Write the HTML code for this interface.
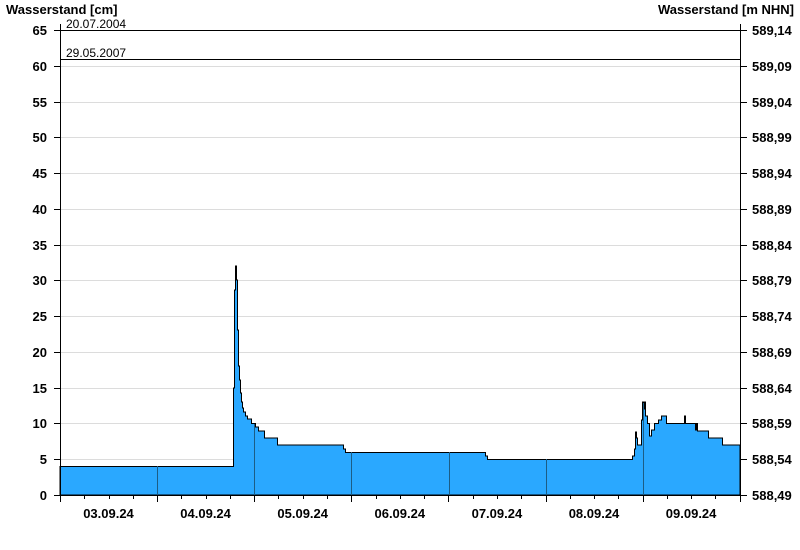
<!DOCTYPE html>
<html><head><meta charset="utf-8"><style>
body{margin:0;background:#fff;width:800px;height:550px;overflow:hidden}
svg{display:block;font-family:"Liberation Sans",Arial,sans-serif}
.l{font-size:13px;font-weight:bold;fill:#000}
</style></head><body>
<svg width="800" height="550" viewBox="0 0 800 550">
<text x="6" y="14" class="l">Wasserstand [cm]</text>
<text x="794" y="14" class="l" text-anchor="end">Wasserstand [m NHN]</text>
<g stroke="#dcdcdc" stroke-width="1">
<line x1="60" x2="740" y1="459.5" y2="459.5"/><line x1="60" x2="740" y1="423.5" y2="423.5"/>
<line x1="60" x2="740" y1="388.5" y2="388.5"/><line x1="60" x2="740" y1="352.5" y2="352.5"/>
<line x1="60" x2="740" y1="316.5" y2="316.5"/><line x1="60" x2="740" y1="280.5" y2="280.5"/>
<line x1="60" x2="740" y1="245.5" y2="245.5"/><line x1="60" x2="740" y1="209.5" y2="209.5"/>
<line x1="60" x2="740" y1="173.5" y2="173.5"/><line x1="60" x2="740" y1="137.5" y2="137.5"/>
<line x1="60" x2="740" y1="102.5" y2="102.5"/><line x1="60" x2="740" y1="66.5" y2="66.5"/>
</g>
<path fill="#2aa8ff" stroke="#000" stroke-width="1" d="M60,466.5 H233.5 V388 H234.5 V290 H235.5 V266 H236.5 V280 H237.5 V330 H238.5 V366 H239.5 V380 H240.5 V393 H241.5 V402 H242.5 V408 H243.5 V412 H245.5 V416 H247.5 V419 H251.5 V423.5 H255.5 V427 H258.5 V431 H264.5 V438 H277.5 V445 H343.5 V449 H345.5 V452.5 H485.5 V456 H487.5 V459.5 H632.5 V456 H634.5 V449 H635.5 V432 H636.5 V438 H637.5 V445 H641.5 V420 H642.5 V402 H643.5 V409 H644.5 V402 H645.5 V416 H647.5 V423.5 H649.5 V436 H651.5 V430 H654.5 V423.5 H658.5 V420 H661.5 V416 H666.5 V423.5 H684.5 V416 H685.5 V423.5 H695.5 V430 H696.5 V423.5 H697.5 V431 H708.5 V438 H722.5 V445 H740 V495 H60 Z"/>
<g stroke="#1c5d85" stroke-width="1">
<line x1="157.5" x2="157.5" y1="466" y2="495"/><line x1="254.5" x2="254.5" y1="424" y2="495"/>
<line x1="351.5" x2="351.5" y1="452" y2="495"/><line x1="449.5" x2="449.5" y1="452" y2="495"/>
<line x1="546.5" x2="546.5" y1="459" y2="495"/><line x1="643.5" x2="643.5" y1="403" y2="495"/>
</g>
<g stroke="#000" stroke-width="1">
<line x1="60" x2="740" y1="30.5" y2="30.5"/><line x1="60" x2="740" y1="59.5" y2="59.5"/>
<line x1="60.5" x2="60.5" y1="24" y2="495"/><line x1="740.5" x2="740.5" y1="24" y2="495"/>
<line x1="60" x2="741" y1="495.5" y2="495.5"/>
<path d="M54,495.5H60M54,459.5H60M54,423.5H60M54,388.5H60M54,352.5H60M54,316.5H60M54,280.5H60M54,245.5H60M54,209.5H60M54,173.5H60M54,137.5H60M54,102.5H60M54,66.5H60M54,30.5H60"/>
<path d="M741,495.5H747M741,459.5H747M741,423.5H747M741,388.5H747M741,352.5H747M741,316.5H747M741,280.5H747M741,245.5H747M741,209.5H747M741,173.5H747M741,137.5H747M741,102.5H747M741,66.5H747M741,30.5H747"/>
<path d="M60.5,495V502M84.5,495V499M109.5,495V499M133.5,495V499M157.5,495V502M181.5,495V499M206.5,495V499M230.5,495V499M254.5,495V502M278.5,495V499M303.5,495V499M327.5,495V499M351.5,495V502M376.5,495V499M400.5,495V499M424.5,495V499M448.5,495V502M473.5,495V499M497.5,495V499M521.5,495V499M546.5,495V502M570.5,495V499M594.5,495V499M618.5,495V499M643.5,495V502M667.5,495V499M691.5,495V499M715.5,495V499M740.5,495V502"/>
</g>
<text x="66" y="28" font-size="12">20.07.2004</text>
<text x="66" y="57" font-size="12">29.05.2007</text>
<g class="l" text-anchor="end">
<text x="47" y="500">0</text><text x="47" y="464">5</text><text x="47" y="428">10</text><text x="47" y="393">15</text><text x="47" y="357">20</text><text x="47" y="321">25</text><text x="47" y="285">30</text><text x="47" y="250">35</text><text x="47" y="214">40</text><text x="47" y="178">45</text><text x="47" y="142">50</text><text x="47" y="107">55</text><text x="47" y="71">60</text><text x="47" y="35">65</text>
</g>
<g class="l">
<text x="752" y="500">588,49</text><text x="752" y="464">588,54</text><text x="752" y="428">588,59</text><text x="752" y="393">588,64</text><text x="752" y="357">588,69</text><text x="752" y="321">588,74</text><text x="752" y="285">588,79</text><text x="752" y="250">588,84</text><text x="752" y="214">588,89</text><text x="752" y="178">588,94</text><text x="752" y="142">588,99</text><text x="752" y="107">589,04</text><text x="752" y="71">589,09</text><text x="752" y="35">589,14</text>
</g>
<g class="l" text-anchor="middle">
<text x="108.5" y="518">03.09.24</text><text x="205.6" y="518">04.09.24</text><text x="302.7" y="518">05.09.24</text><text x="399.8" y="518">06.09.24</text><text x="496.9" y="518">07.09.24</text><text x="594" y="518">08.09.24</text><text x="691.1" y="518">09.09.24</text>
</g>
</svg>
</body></html>
